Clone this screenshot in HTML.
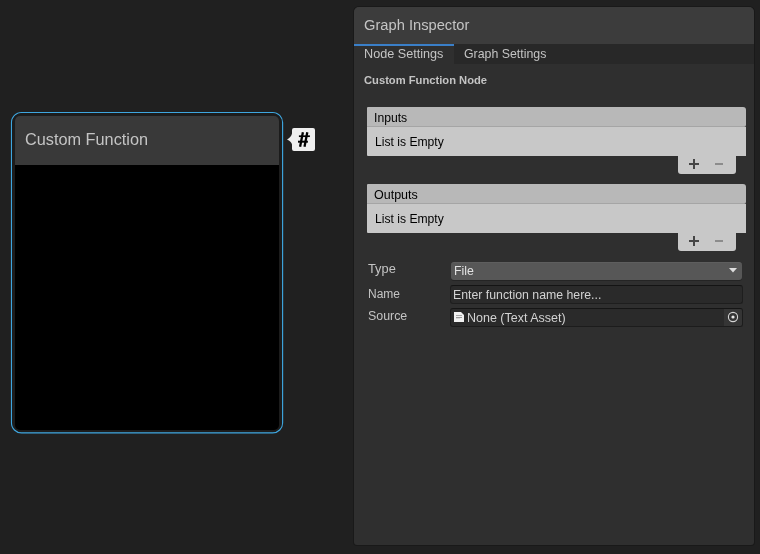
<!DOCTYPE html>
<html><head><meta charset="utf-8">
<style>
*{box-sizing:border-box;margin:0;padding:0}
html,body{width:760px;height:554px;overflow:hidden;background:#202020;font-family:"Liberation Sans",sans-serif}
.t,.ntitle,.ptitle{will-change:transform}
.a{position:absolute}
.node{left:12px;top:113px;width:270px;height:319px;background:#1c1c1c;border-radius:10px}
.nhead{left:15px;top:116px;width:264px;height:49px;background:#393939;border-radius:5px 5px 0 0}
.nbody{left:15px;top:165px;width:264px;height:264.5px;background:#000;border-radius:0 0 5px 5px}
.ntitle{left:25px;top:129px;font-size:16.3px;color:#c4c4c4;white-space:nowrap;line-height:20px}
.panel{left:353px;top:6px;width:402px;height:540px;background:#191919;border-radius:6px 6px 4px 4px}
.pin{left:354px;top:7px;width:400px;height:538px;background:#2f2f2f;border-radius:5px 5px 3px 3px;overflow:hidden}
.phead{left:0;top:0;width:400px;height:37px;background:#3c3c3c}
.ptitle{left:10px;top:10px;font-size:14.7px;color:#c4c4c4;white-space:nowrap;line-height:17px}
.tabbar{left:0;top:37px;width:400px;height:20px;background:#282828}
.tab1{left:0;top:37px;width:100px;height:20px;background:#2f2f2f;border-top:2px solid #3a7fc8}
.t{white-space:nowrap;font-size:12px;line-height:14px;color:#c4c4c4}
.lst{background:#c8c8c8}
</style></head>
<body>
<svg class="a" style="left:0;top:100px" width="300" height="345" viewBox="0 100 300 345"><rect x="11.5" y="112.5" width="271.1" height="320.4" rx="10" ry="10" fill="none" stroke="#3ea6df" stroke-width="1.15"/></svg>
<div class="a node"></div>
<div class="a nhead"></div>
<div class="a nbody"></div>
<div class="a ntitle">Custom Function</div>
<svg class="a" style="left:286px;top:127px" width="32" height="26" viewBox="286 127 32 26">
<path d="M294 128 H313 Q315 128 315 130 V149 Q315 151 313 151 H294 Q292 151 292 149 V144.4 Q291.3 141.8 287 139.6 Q291.3 137.2 292 133.6 V130 Q292 128 294 128 Z" fill="#efefef"/>
<path d="M302.9 132.3 L300.1 146.7 M307.3 132.3 L304.5 146.7" stroke="#000" stroke-width="2.3" fill="none"/><path d="M298.9 136.2 H309.9" stroke="#000" stroke-width="1.7"/><path d="M298 141.7 H307.9" stroke="#000" stroke-width="2"/>
</svg>
<div class="a panel"></div>
<div class="a pin">
 <div class="a phead"></div>
 <div class="a ptitle">Graph Inspector</div>
 <div class="a tabbar"></div>
 <div class="a tab1"></div>
</div>
<div class="a t" style="left:364px;top:47px;font-size:12.65px">Node Settings</div>
<div class="a t" style="left:464px;top:47px;font-size:12.35px">Graph Settings</div>
<div class="a t" style="left:364px;top:73px;font-weight:bold;font-size:11.2px">Custom Function Node</div>

<div class="a lst" style="left:367px;top:107px;width:379px;height:20px;background:#b8b8b8;border-radius:1px 3px 2px 0;border-bottom:1px solid #a5a5a5"></div>
<div class="a lst" style="left:367px;top:127px;width:379px;height:29px;border-radius:0 0 0 1px"></div>
<div class="a lst" style="left:678px;top:155px;width:58px;height:19px;border-radius:0 0 3px 3px"></div>
<div class="a t" style="left:374px;top:111px;color:#000;font-size:12.2px">Inputs</div>
<div class="a t" style="left:375px;top:135px;color:#000;font-size:12.15px">List is Empty</div>
<div class="a" style="left:689px;top:163px;width:10px;height:2px;background:#454545"></div><div class="a" style="left:693px;top:159px;width:2px;height:10px;background:#454545"></div><div class="a" style="left:715px;top:163px;width:8px;height:2px;background:#8c8c8c"></div>

<div class="a lst" style="left:367px;top:184px;width:379px;height:20px;background:#b8b8b8;border-radius:1px 3px 2px 0;border-bottom:1px solid #a5a5a5"></div>
<div class="a lst" style="left:367px;top:204px;width:379px;height:29px;border-radius:0 0 0 1px"></div>
<div class="a lst" style="left:678px;top:232px;width:58px;height:19px;border-radius:0 0 3px 3px"></div>
<div class="a t" style="left:374px;top:188px;color:#000;font-size:12.5px">Outputs</div>
<div class="a t" style="left:375px;top:212px;color:#000;font-size:12.15px">List is Empty</div>
<div class="a" style="left:689px;top:240px;width:10px;height:2px;background:#454545"></div><div class="a" style="left:693px;top:236px;width:2px;height:10px;background:#454545"></div><div class="a" style="left:715px;top:240px;width:8px;height:2px;background:#8c8c8c"></div>

<div class="a t" style="left:368px;top:262px;font-size:12.8px">Type</div>
<div class="a t" style="left:368px;top:287px;font-size:12px">Name</div>
<div class="a t" style="left:368px;top:309px;font-size:12.4px">Source</div>

<div class="a" style="left:451px;top:262px;width:291px;height:19px;background:#242424;border-radius:3px"></div>
<div class="a" style="left:451px;top:262px;width:291px;height:18px;background:#575757;border-radius:3px;border-top:1px solid #5e5e5e"></div>
<div class="a t" style="left:454px;top:264px;color:#e2e2e2;font-size:12.3px">File</div>
<svg class="a" style="left:726px;top:264px" width="14" height="12" viewBox="726 264 14 12"><path d="M729 268 H737 L733 272.4 Z" fill="#dedede"/></svg>
<div class="a" style="left:450px;top:285px;width:293px;height:19px;background:#2a2a2a;border:1px solid #1e1e1e;border-top-color:#141414;border-radius:3px"></div>
<div class="a t" style="left:453px;top:288px;color:#d2d2d2;font-size:12.3px">Enter function name here...</div>
<div class="a" style="left:450px;top:308px;width:293px;height:19px;background:#2a2a2a;border:1px solid #1c1c1c;border-top-color:#151515;border-radius:3px"></div>
<div class="a" style="left:724px;top:309px;width:18px;height:17px;background:#353535;border-radius:0 2px 2px 0"></div>
<svg class="a" style="left:724px;top:308px" width="18" height="18" viewBox="724 308 18 18"><circle cx="733" cy="317" r="4.6" fill="none" stroke="#d4d4d4" stroke-width="1.1"/><circle cx="733" cy="317" r="1.6" fill="#e8e8e8"/></svg>
<svg class="a" style="left:452px;top:310px" width="14" height="14" viewBox="452 310 14 14"><path d="M454 312 H461 L464 315 V322 H454 Z" fill="#f2f2f2"/><rect x="456" y="315" width="6" height="1" fill="#a8a8a8"/><rect x="456" y="317" width="6" height="1" fill="#9a9a9a"/><rect x="456" y="318" width="4" height="1" fill="#d8d8d8"/></svg>
<div class="a t" style="left:467px;top:311px;color:#d2d2d2;font-size:12.5px">None (Text Asset)</div>
</body></html>
